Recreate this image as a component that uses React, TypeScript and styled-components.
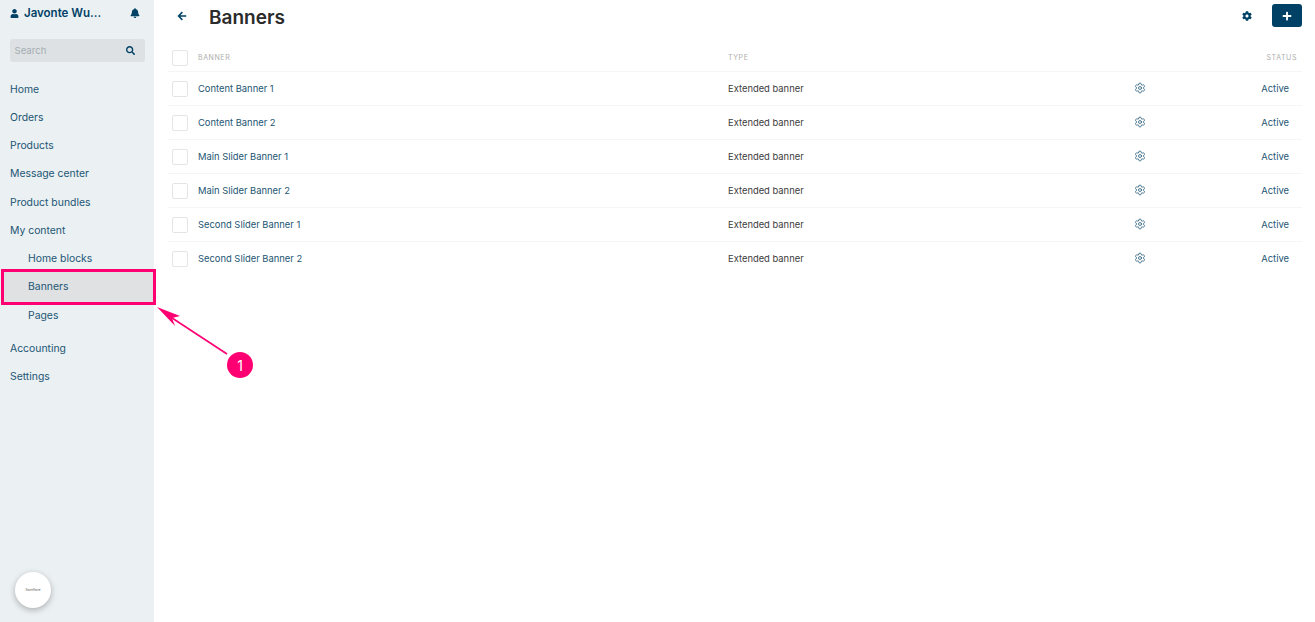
import React from "react";
import styled, { createGlobalStyle } from "styled-components";
import { FaArrowLeft, FaBell, FaCog, FaPlus, FaSearch, FaUser } from "react-icons/fa";
import { Settings } from "lucide-react";

const banners = [
  "Content Banner 1",
  "Content Banner 2",
  "Main Slider Banner 1",
  "Main Slider Banner 2",
  "Second Slider Banner 1",
  "Second Slider Banner 2",
];

const App: React.FC = () => {
  return (
    <Page>
      <GlobalStyle />
      <Sidebar>
        <UserBar>
          <UserName>
            <FaUser size={9} />
            <span>Javonte Wu...</span>
          </UserName>
          <FaBell size={10} />
        </UserBar>
        <SearchBox>
          <span>Search</span>
          <FaSearch size={9} />
        </SearchBox>
        <Nav>
          <NavItem>Home</NavItem>
          <NavItem>Orders</NavItem>
          <NavItem>Products</NavItem>
          <NavItem>Message center</NavItem>
          <NavItem>Product bundles</NavItem>
          <NavItem>My content</NavItem>
          <SubNav>
            <SubItem>Home blocks</SubItem>
            <SubItem $active>Banners</SubItem>
            <SubItem>Pages</SubItem>
          </SubNav>
          <NavItem>Accounting</NavItem>
          <NavItem>Settings</NavItem>
        </Nav>
        <Widget>
          <WidgetLogo>StoreStore</WidgetLogo>
        </Widget>
      </Sidebar>

      <Main>
        <TopBar>
          <TitleGroup>
            <BackButton>
              <FaArrowLeft size={10} />
            </BackButton>
            <Title>Banners</Title>
          </TitleGroup>
          <Actions>
            <FaCog size={10} color="#004165" />
            <AddButton>
              <FaPlus size={10} />
            </AddButton>
          </Actions>
        </TopBar>

        <Table>
          <HeadRow>
            <Check />
            <HeadCell>Banner</HeadCell>
            <HeadCell>Type</HeadCell>
            <span />
            <HeadCell $right>Status</HeadCell>
          </HeadRow>
          {banners.map((name) => (
            <Row key={name}>
              <Check />
              <NameCell>{name}</NameCell>
              <TypeCell>Extended banner</TypeCell>
              <IconCell>
                <Settings size={12} strokeWidth={1.5} />
              </IconCell>
              <StatusCell>Active</StatusCell>
            </Row>
          ))}
        </Table>
      </Main>

      <Arrow viewBox="0 0 80 60" aria-hidden="true">
        <path d="M71 48 L10 8" stroke="#fe0072" strokeWidth="1.6" fill="none" />
        <path d="M1 1 L24 10 L16 12 L19 20 Z" fill="#fe0072" />
      </Arrow>
      <Badge>1</Badge>
    </Page>
  );
};

export default App;

const GlobalStyle = createGlobalStyle`
  html, body {
    margin: 0;
    padding: 0;
    background: #fff;
    font-family: Inter, "Liberation Sans", sans-serif;
  }
`;

const Page = styled.div`
  position: relative;
  display: flex;
  width: 1315px;
  height: 622px;
  overflow: hidden;
  background: #fff;
`;

const Sidebar = styled.aside`
  position: relative;
  flex: 0 0 154px;
  min-width: 0;
  box-sizing: border-box;
  padding-top: 6px;
  background: #ebf0f3;
  color: #1d5673;
`;

const UserBar = styled.div`
  display: flex;
  align-items: center;
  justify-content: space-between;
  height: 14px;
  padding: 0 14px 0 10px;
  color: #004165;
`;

const UserName = styled.div`
  display: flex;
  align-items: center;
  gap: 5px;
  font-size: 11.5px;
  font-weight: 600;
`;

const SearchBox = styled.div`
  display: flex;
  align-items: center;
  justify-content: space-between;
  box-sizing: border-box;
  width: 135px;
  height: 23.5px;
  margin: 18.5px 0 0 9.5px;
  padding: 0 10px 0 5px;
  border-radius: 3px;
  background: #dde1e4;
  color: #004165;

  span {
    font-size: 9.6px;
    color: #a4adb2;
  }
`;

const Nav = styled.nav`
  display: flex;
  flex-direction: column;
  margin-top: 13.5px;
`;

const NavItem = styled.div`
  height: 28.25px;
  padding-left: 10px;
  font-size: 10.4px;
  line-height: 28.25px;
`;

const SubNav = styled.div`
  display: flex;
  flex-direction: column;
  margin-bottom: 5px;
`;

const SubItem = styled.div<{ $active?: boolean }>`
  position: relative;
  box-sizing: border-box;
  width: ${({ $active }) => ($active ? "155px" : "154px")};
  height: ${({ $active }) => ($active ? "36px" : "28.25px")};
  margin: ${({ $active }) => ($active ? "-4.75px 0 -3px 1px" : "0")};
  padding-left: ${({ $active }) => ($active ? "24px" : "28px")};
  font-size: 10.4px;
  line-height: ${({ $active }) => ($active ? "30px" : "28.25px")};
  background: ${({ $active }) => ($active ? "#dfe1e3" : "transparent")};
  border: ${({ $active }) => ($active ? "3px solid #fe0072" : "none")};
`;

const Widget = styled.div`
  position: absolute;
  left: 15px;
  top: 572px;
  display: flex;
  align-items: center;
  justify-content: center;
  width: 36px;
  height: 36px;
  border-radius: 50%;
  background: #fff;
  box-shadow: 0 2px 6px rgba(0, 0, 0, 0.28);
`;

const WidgetLogo = styled.span`
  font-size: 3px;
  color: #555;
`;

const Main = styled.main`
  flex: 1;
  min-width: 0;
  padding: 0 13px 0 14px;
`;

const TopBar = styled.header`
  display: flex;
  align-items: center;
  justify-content: space-between;
  height: 34px;
`;

const TitleGroup = styled.div`
  display: flex;
  align-items: center;
`;

const BackButton = styled.div`
  display: flex;
  align-items: center;
  width: 41px;
  margin-bottom: 2px;
  padding-left: 9px;
  box-sizing: border-box;
  color: #004165;
`;

const Title = styled.h1`
  margin: 0;
  font-size: 19px;
  font-weight: 600;
  color: #2b2b2b;
`;

const Actions = styled.div`
  display: flex;
  align-items: center;
  align-self: flex-start;
  gap: 20px;
  padding-top: 4px;
`;

const AddButton = styled.div`
  display: flex;
  align-items: center;
  justify-content: center;
  width: 30px;
  height: 23px;
  border-radius: 3px;
  background: #004165;
  color: #fff;
`;

const Table = styled.div`
  display: flex;
  flex-direction: column;
  margin-top: 9.5px;
`;

const rowColumns = "26px 530px 1fr 30px 147px";

const HeadRow = styled.div`
  display: grid;
  grid-template-columns: ${rowColumns};
  align-items: center;
  height: 28px;
  padding-left: 4px;
  border-bottom: 1px solid #f5f5f6;
  box-sizing: border-box;
`;

const Row = styled(HeadRow)`
  height: 34px;

  &:last-child {
    border-bottom-color: transparent;
  }
`;

const Check = styled.div`
  width: 16px;
  height: 16px;
  margin-top: 1px;
  box-sizing: border-box;
  border: 1px solid #e3e5e6;
  border-radius: 2px;
  background: #fff;
`;

const HeadCell = styled.div<{ $right?: boolean }>`
  font-size: 7px;
  letter-spacing: 0.6px;
  text-transform: uppercase;
  color: #adadad;
  text-align: ${({ $right }) => ($right ? "right" : "left")};
  padding-right: ${({ $right }) => ($right ? "5px" : "0")};
`;

const NameCell = styled.div`
  font-size: 9.4px;
  color: #1d5673;
`;

const TypeCell = styled.div`
  font-size: 9.4px;
  color: #3c3c3c;
`;

const IconCell = styled.div`
  display: flex;
  justify-content: center;
  margin-bottom: 1px;
  color: #1d5673;
`;

const StatusCell = styled.div`
  padding-right: 13px;
  font-size: 9.4px;
  text-align: right;
  color: #1d5673;
`;

const Arrow = styled.svg`
  position: absolute;
  left: 156px;
  top: 306px;
  width: 80px;
  height: 60px;
`;

const Badge = styled.div`
  position: absolute;
  left: 227px;
  top: 352px;
  display: flex;
  align-items: center;
  justify-content: center;
  width: 26px;
  height: 26px;
  border-radius: 50%;
  background: #fe0072;
  color: #fff;
  font-size: 14px;
`;
